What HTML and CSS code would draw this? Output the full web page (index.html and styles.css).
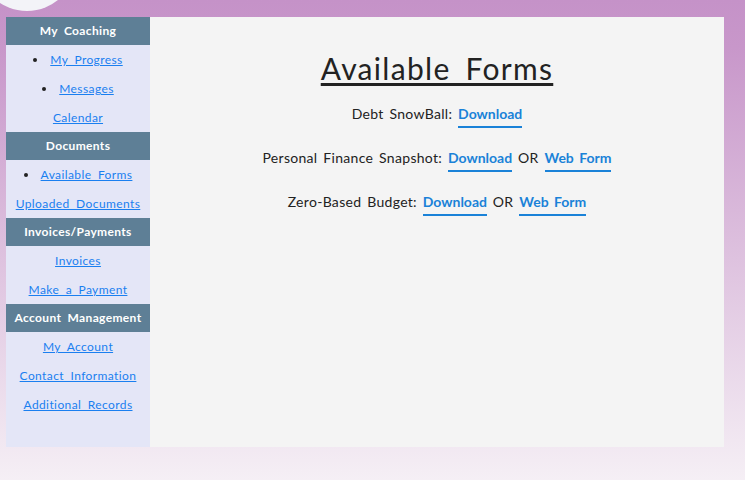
FILE: index.html
```html
<!DOCTYPE html>
<html>
<head>
<meta charset="utf-8">
<link rel="stylesheet" href="styles.css">
</head>
<body>
<div class="blob"></div>
<div class="frame">
  <nav class="sidebar">
    <div class="sec-title">My Coaching</div>
    <ul class="links">
      <li class="bullet"><a href="#">My Progress</a></li>
      <li class="bullet"><a href="#">Messages</a></li>
      <li><a href="#">Calendar</a></li>
    </ul>
    <div class="sec-title">Documents</div>
    <ul class="links">
      <li class="bullet"><a href="#">Available Forms</a></li>
      <li><a href="#">Uploaded Documents</a></li>
    </ul>
    <div class="sec-title">Invoices/Payments</div>
    <ul class="links">
      <li><a href="#">Invoices</a></li>
      <li><a href="#">Make a Payment</a></li>
    </ul>
    <div class="sec-title">Account Management</div>
    <ul class="links">
      <li><a href="#">My Account</a></li>
      <li><a href="#">Contact Information</a></li>
      <li><a href="#">Additional Records</a></li>
    </ul>
  </nav>
  <main class="content">
    <h1 class="title">Available Forms</h1>
    <p class="form-row">Debt SnowBall: <a href="#">Download</a></p>
    <p class="form-row">Personal Finance Snapshot: <a href="#">Download</a> OR <a href="#">Web Form</a></p>
    <p class="form-row">Zero-Based Budget: <a href="#">Download</a> OR <a href="#">Web Form</a></p>
  </main>
</div>
</body>
</html>
```

FILE: styles.css
```css
html, body {
  margin: 0;
  padding: 0;
  height: 100%;
}
body {
  background: linear-gradient(to bottom, #c592c8 0%, #c897ca 10%, #f5eff5 100%);
  font-family: "Lato", "Noto Sans", sans-serif;
  overflow: hidden;
  position: relative;
}
.blob {
  position: absolute;
  left: -22px;
  top: -87px;
  width: 98px;
  height: 98px;
  border-radius: 50%;
  background: #f3f3f8;
}
.frame {
  position: relative;
  margin: 17px 0 0 6px;
  width: 718px;
  height: 430px;
  display: flex;
}
.sidebar {
  width: 144px;
  background: #e4e6f7;
  flex: none;
}
.sec-title {
  height: 28px;
  line-height: 28px;
  background: #5e7f96;
  color: #fff;
  font-weight: 700;
  font-size: 12px;
  text-align: center;
  word-spacing: 3px;
  letter-spacing: 0.35px;
}
.links {
  margin: 0;
  padding: 0;
  list-style: none;
}
.links li {
  height: 29px;
  line-height: 29px;
  text-align: center;
  font-size: 12px;
  word-spacing: 3px;
  letter-spacing: 0.4px;
}
.links li.bullet {
  list-style: disc inside;
}
.links li.bullet::marker {
  color: #222;
}
.links a {
  color: #1a7ff0;
  text-decoration: underline;
}
.content {
  flex: 1;
  background: #f4f4f4;
  text-align: center;
  color: #222;
}
.title {
  margin: 32px 0 0;
  font-size: 30px;
  font-weight: 400;
  line-height: 38px;
  text-decoration: underline;
  text-decoration-thickness: 3px;
  text-underline-offset: 3px;
  word-spacing: 6px;
  letter-spacing: 1.3px;
}
.form-row {
  margin: 0;
  height: 44px;
  line-height: 44px;
  font-size: 14px;
  word-spacing: 2px;
  letter-spacing: 0.3px;
}
.title + .form-row {
  margin-top: 5px;
}
.form-row a {
  color: #1a82d8;
  font-weight: 700;
  text-decoration: none;
  border-bottom: 2px solid #1a82d8;
  padding-bottom: 4px;
  letter-spacing: 0;
}
```
